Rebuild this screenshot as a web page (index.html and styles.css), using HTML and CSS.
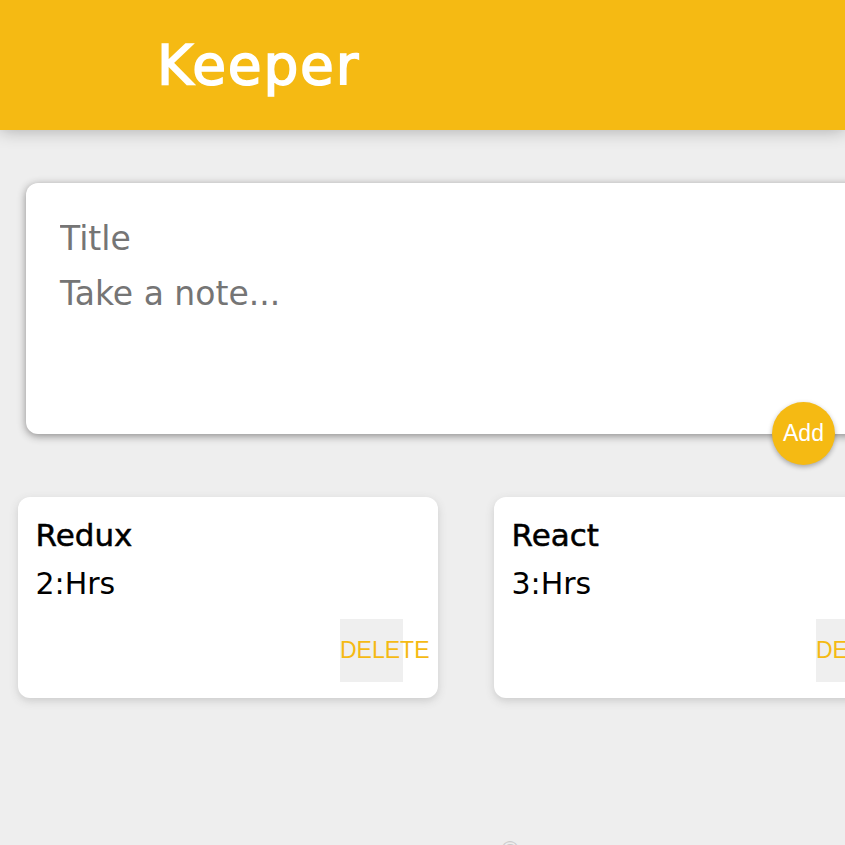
FILE: index.html
```html
<!DOCTYPE html>
<html lang="en">
<head>
<meta charset="utf-8">
<title>Keeper</title>
<link rel="stylesheet" href="styles.css">
</head>
<body>
<header class="header">
  <h1 class="logo">Keeper</h1>
</header>
<main class="main">
  <form class="create-note">
    <input class="title-input" name="title" placeholder="Title">
    <textarea class="content-input" name="content" placeholder="Take a note..."></textarea>
    <button type="button" class="add-btn">Add</button>
  </form>
  <div class="notes">
    <div class="note">
      <h1 class="note-title">Redux</h1>
      <p class="note-body">2:Hrs</p>
      <button type="button" class="delete-btn">DELETE</button>
    </div>
    <div class="note">
      <h1 class="note-title">React</h1>
      <p class="note-body">3:Hrs</p>
      <button type="button" class="delete-btn">DELETE</button>
    </div>
  </div>
</main>
<footer class="footer"><p class="copy">©</p></footer>
</body>
</html>
```
FILE: styles.css
```css
html, body {
  margin: 0;
  padding: 0;
  overflow: hidden;
  height: 845px;
}
body {
  background: #eeeeee;
  font-family: "DejaVu Sans", sans-serif;
  position: relative;
}
.header {
  background: #f5ba13;
  height: 130px;
  box-shadow: 0 0 17px 0 rgba(0,0,0,0.3);
  display: flex;
  align-items: center;
  padding-left: 157px;
  position: relative;
  z-index: 1;
}
.logo {
  margin: 0;
  color: #fff;
  font-size: 55px;
  line-height: 1;
  font-weight: normal;
  letter-spacing: 1.8px;
  -webkit-text-stroke: 1.6px #fff;
}
.main {
  padding-top: 53px;
}
.create-note {
  position: relative;
  width: 840px;
  margin: 0 0 0 26px;
  background: #fff;
  padding: 28px 26px 24px;
  border-radius: 12px;
  box-shadow: 0 2px 9px rgb(138,137,137);
  box-sizing: border-box;
  height: 251px;
  display: flex;
  flex-direction: column;
}
.title-input, .content-input {
  border: none;
  outline: none;
  padding: 7px 7px 7px 8px;
  font-family: inherit;
  font-size: 33px;
  color: #333;
  background: transparent;
  resize: none;
  width: 100%;
  box-sizing: border-box;
}
.title-input {
  height: 55px;
}
.content-input {
  flex: 1;
  line-height: 41px;
}
.title-input::placeholder, .content-input::placeholder {
  color: #757575;
}
.add-btn {
  position: absolute;
  right: 31px;
  bottom: -31px;
  width: 63px;
  height: 63px;
  border-radius: 50%;
  border: none;
  background: #f5ba13;
  color: #fff;
  font-family: "Liberation Sans", Arial, sans-serif;
  font-size: 23px;
  padding: 0;
  box-shadow: 0 2px 5px rgba(0,0,0,0.3);
}
.notes {
  display: flex;
  gap: 56px;
  margin-top: 63px;
  padding-left: 18px;
}
.note {
  flex: none;
  width: 420px;
  height: 201px;
  box-sizing: border-box;
  background: #fff;
  border-radius: 12px;
  box-shadow: 0 3px 9px #cccccc;
  padding: 19px 17.5px 16px;
  display: flex;
  flex-direction: column;
}
.note-title {
  margin: 0;
  font-size: 31px;
  line-height: 38px;
  font-weight: normal;
  -webkit-text-stroke: 0.5px #000;
  color: #000;
}
.note-body {
  margin: 11px 0 0;
  font-size: 30px;
  line-height: 38px;
  color: #000;
}
.delete-btn {
  margin-top: auto;
  align-self: flex-end;
  margin-right: 17.5px;
  width: 63px;
  height: 63px;
  border: none;
  padding: 0;
  background: #efefef;
  color: #f5ba13;
  font-family: "Liberation Sans", Arial, sans-serif;
  font-size: 23px;
  text-align: left;
  white-space: nowrap;
  overflow: visible;
}
.footer {
  position: absolute;
  left: 0;
  right: 0;
  top: 836px;
  text-align: center;
}
.copy {
  margin: 0 0 0 175px;
  color: #ccc;
  font-size: 22px;
}
```
